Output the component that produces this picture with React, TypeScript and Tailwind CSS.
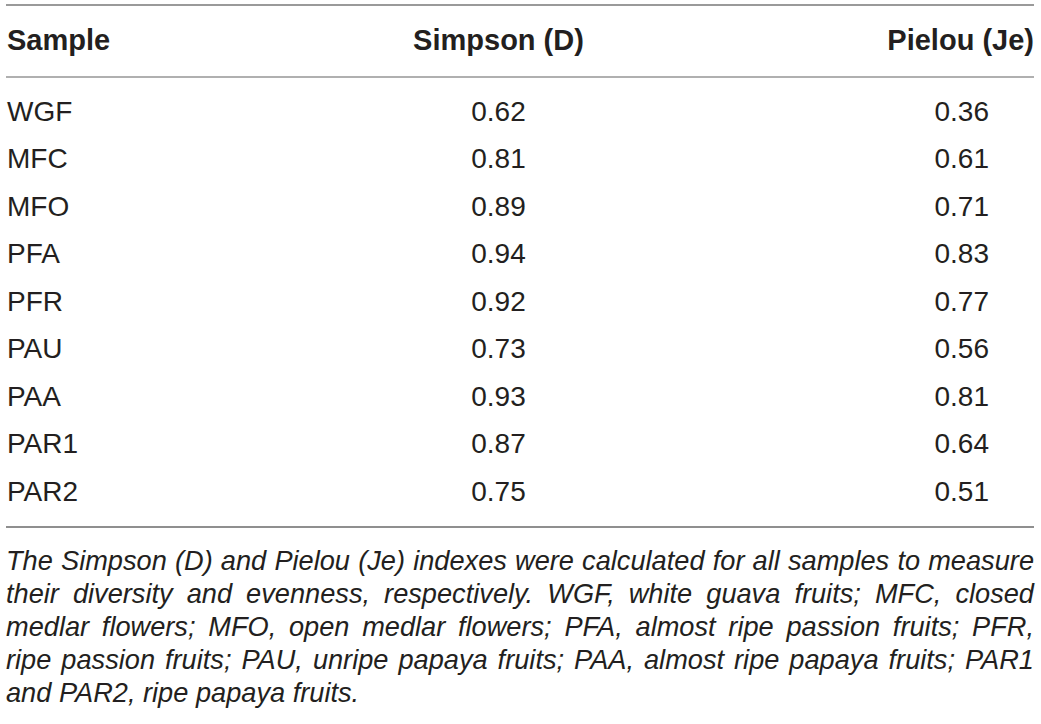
const rows: [string, string, string][] = [
  ["WGF", "0.62", "0.36"],
  ["MFC", "0.81", "0.61"],
  ["MFO", "0.89", "0.71"],
  ["PFA", "0.94", "0.83"],
  ["PFR", "0.92", "0.77"],
  ["PAU", "0.73", "0.56"],
  ["PAA", "0.93", "0.81"],
  ["PAR1", "0.87", "0.64"],
  ["PAR2", "0.75", "0.51"],
];

// caption wrapped as in the printed table, each full line justified
const caption = [
  "The Simpson (D) and Pielou (Je) indexes were calculated for all samples to measure",
  "their diversity and evenness, respectively. WGF, white guava fruits; MFC, closed",
  "medlar flowers; MFO, open medlar flowers; PFA, almost ripe passion fruits; PFR,",
  "ripe passion fruits; PAU, unripe papaya fruits; PAA, almost ripe papaya fruits; PAR1",
];

const cols = "grid grid-cols-[300px_385px_1fr]";

export default function App() {
  return (
    <div className="h-[724px] w-[1041px] overflow-hidden bg-white pl-[6px] pr-[7px] pt-[4px] font-['Liberation_Sans',Arial,sans-serif] text-[#231f20]">
      <div className="border-t-2 border-[#9a9a9a]">
        <div className={`${cols} h-[72px] items-center border-b-2 border-[#b0b0b0] text-[29px] font-bold`}>
          <div className="pl-[1px]">Sample</div>
          <div className="text-center">Simpson (D)</div>
          <div className="text-right">Pielou (Je)</div>
        </div>
        <div className="border-b-2 border-[#8f8f8f] py-[10px] text-[28px] font-light">
          {rows.map(([s, d, j]) => (
            <div key={s} className={`${cols} h-[47.5px] items-center`}>
              <div className="pl-[1px]">{s}</div>
              <div className="text-center">{d}</div>
              <div className="pr-[45px] text-right">{j}</div>
            </div>
          ))}
        </div>
      </div>
      <div className="mt-[16px] text-[27.2px] italic leading-[33px]">
        {caption.map((line) => (
          <p key={line} className="whitespace-nowrap text-justify [text-align-last:justify]">
            {line}
          </p>
        ))}
        <p>and PAR2, ripe papaya fruits.</p>
      </div>
    </div>
  );
}
